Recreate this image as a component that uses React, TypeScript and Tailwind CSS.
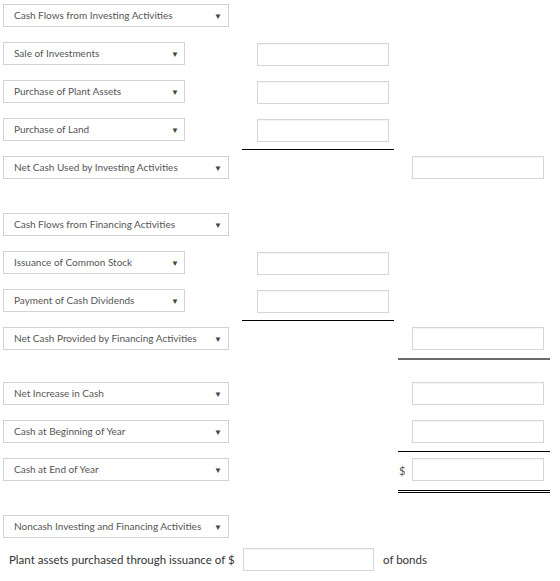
import type { ReactNode } from "react";

type Line = "none" | "single" | "gray" | "double";

interface RowProps {
  label: string;
  wide?: boolean;
  mid?: boolean;
  midLine?: boolean;
  right?: boolean;
  rightLine?: Line;
  dollar?: boolean;
}

function Dropdown({ label, wide }: { label: string; wide?: boolean }) {
  return (
    <button
      type="button"
      className={`flex h-[23px] items-center justify-between whitespace-nowrap border border-[#d2d2d2] bg-white pl-[10px] text-left text-[10px] text-[#555] ${
        wide ? "w-[226px] pr-[6px]" : "w-[182px] pr-[5px]"
      }`}
    >
      <span>{label}</span>
      <span className="text-[8px] leading-none text-[#444]">▼</span>
    </button>
  );
}

function Field({ className = "w-[132px]" }: { className?: string }) {
  return (
    <input
      type="text"
      className={`h-[23px] border border-[#d6d6d6] bg-white shadow-[inset_0_1px_1px_rgba(0,0,0,0.04)] outline-none ${className}`}
    />
  );
}

const rightLines: Record<Line, string> = {
  none: "h-[32px]",
  single: "h-[32px] border-b border-black",
  gray: "h-[33px] border-b-2 border-[#6b6b6b]",
  double: "h-[35px] border-b-[3px] border-double border-black",
};

function Row({ label, wide, mid, midLine, right, rightLine = "none", dollar }: RowProps) {
  return (
    <div className="flex h-[38px] items-start">
      <div className="w-[242px] pl-[3px]">
        <Dropdown label={label} wide={wide} />
      </div>
      <div
        className={`w-[152px] pl-[15px] ${midLine ? "h-[32px] border-b border-black" : ""}`}
      >
        {mid && <Field />}
      </div>
      <div className={`ml-[4px] flex w-[152px] items-start ${rightLines[rightLine]}`}>
        <span className="w-[14px] pl-[1px] pt-[5px] text-[11px] text-[#555]">
          {dollar ? "$" : ""}
        </span>
        {right && <Field />}
      </div>
    </div>
  );
}

function Group({ children, className = "" }: { children: ReactNode; className?: string }) {
  return <div className={className}>{children}</div>;
}

export default function App() {
  return (
    <div
      className="min-h-screen bg-white pt-[4px] text-[#333]"
      style={{ fontFamily: "Lato, 'Liberation Sans', sans-serif" }}
    >
      <Group>
        <Row label="Cash Flows from Investing Activities" wide />
        <Row label="Sale of Investments" mid />
        <Row label="Purchase of Plant Assets" mid />
        <Row label="Purchase of Land" mid midLine />
        <Row label="Net Cash Used by Investing Activities" wide right />
      </Group>

      <Group className="mt-[19px]">
        <Row label="Cash Flows from Financing Activities" wide />
        <Row label="Issuance of Common Stock" mid />
        <Row label="Payment of Cash Dividends" mid midLine />
        <Row label="Net Cash Provided by Financing Activities" wide right rightLine="gray" />
      </Group>

      <Group className="mt-[17px]">
        <Row label="Net Increase in Cash" wide right />
        <Row label="Cash at Beginning of Year" wide right rightLine="single" />
        <Row label="Cash at End of Year" wide right rightLine="double" dollar />
      </Group>

      <Group className="mt-[19px]">
        <div className="pl-[3px]">
          <Dropdown label="Noncash Investing and Financing Activities" wide />
        </div>
        <div className="mt-[10px] flex items-center whitespace-nowrap pl-[9px] text-[11.5px] text-[#333]">
          <span className="w-[234px]">Plant assets purchased through issuance of $</span>
          <Field className="w-[131px]" />
          <span className="ml-[9px]">of bonds</span>
        </div>
      </Group>
    </div>
  );
}
